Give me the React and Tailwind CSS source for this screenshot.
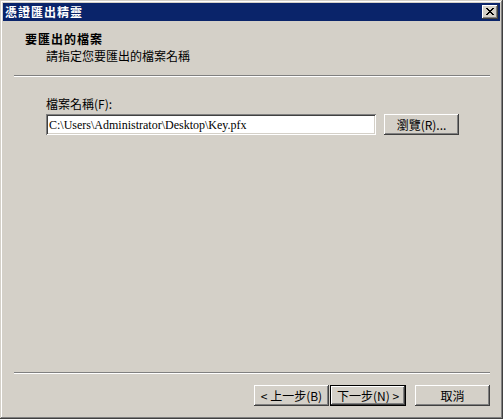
import React from "react";

const raised =
  "shadow-[inset_-1px_-1px_#404040,inset_1px_1px_#ffffff,inset_-2px_-2px_#808080,inset_2px_2px_#d4d0c8]";

function Btn({ children, className = "", def = false }) {
  if (def) {
    return (
      <div className={"border border-black " + className}>
        <div className={"h-full w-full flex items-center justify-center bg-[#d4d0c8] " + raised}>
          {children}
        </div>
      </div>
    );
  }
  return (
    <div className={"flex items-center justify-center bg-[#d4d0c8] " + raised + " " + className}>
      {children}
    </div>
  );
}

export default function App() {
  return (
    <div
      className="w-[503px] h-[419px] bg-[#d4d0c8] p-[3px] flex flex-col shadow-[inset_-1px_-1px_#404040,inset_1px_1px_#d4d0c8,inset_-2px_-2px_#808080,inset_2px_2px_#ffffff] text-black text-[12px] leading-[16px]"
      style={{ fontFamily: '"Noto Sans CJK TC", "Liberation Sans", sans-serif' }}
    >
      {/* title bar */}
      <div className="h-[18px] bg-[#0a246a] flex items-center justify-between pl-[2px] pr-[2px] shrink-0">
        <span className="text-white font-bold tracking-[1px] leading-[16px]">憑證匯出精靈</span>
        <div className={"w-[16px] h-[14px] flex items-center justify-center bg-[#d4d0c8] " + raised}>
          <svg width="8" height="7" viewBox="0 0 8 7" className="mb-[1px]" shapeRendering="crispEdges">
            <path
              fill="#000"
              d="M0 0h2v1h-2zM6 0h2v1h-2zM1 1h2v1h-2zM5 1h2v1h-2zM2 2h4v1h-4zM3 3h2v1h-2zM2 4h4v1h-4zM1 5h2v1h-2zM5 5h2v1h-2zM0 6h2v1h-2zM6 6h2v1h-2z"
            />
          </svg>
        </div>
      </div>

      {/* header */}
      <div className="h-[54px] shrink-0 pt-[10px] pl-[22px]">
        <div className="font-bold tracking-[1px]">要匯出的檔案</div>
        <div className="pl-[21px] mt-[1px]">請指定您要匯出的檔案名稱</div>
      </div>
      <div className="ml-[11px] mr-[10px] h-[2px] border-t border-[#808080] border-b border-b-white shrink-0" />

      {/* body */}
      <div className="flex-1 pt-[19px] pl-[43px]">
        <div>檔案名稱(F):</div>
        <div className="mt-[2px] flex items-start">
          <div className="w-[330px] h-[21px] bg-white shadow-[inset_1px_1px_#808080,inset_-1px_-1px_#ffffff,inset_2px_2px_#404040,inset_-2px_-2px_#d4d0c8] flex items-center pl-[3px]">
            <span
              className="text-[12px] leading-[14px]"
              style={{ fontFamily: '"Liberation Serif", serif' }}
            >
              C:\Users\Administrator\Desktop\Key.pfx
            </span>
          </div>
          <Btn className="ml-[8px] w-[75px] h-[21px]">瀏覽(R)...</Btn>
        </div>
      </div>

      <div className="ml-[11px] mr-[10px] h-[2px] border-t border-[#808080] border-b border-b-white shrink-0" />

      {/* footer */}
      <div className="h-[42px] shrink-0 flex items-start justify-end pt-[11px] pr-[10px]">
        <Btn className="w-[75px] h-[21px]">&lt; 上一步(B)</Btn>
        <Btn def className="ml-[1px] w-[76px] h-[21px]">下一步(N) &gt;</Btn>
        <Btn className="ml-[9px] w-[75px] h-[21px]">取消</Btn>
      </div>
    </div>
  );
}
